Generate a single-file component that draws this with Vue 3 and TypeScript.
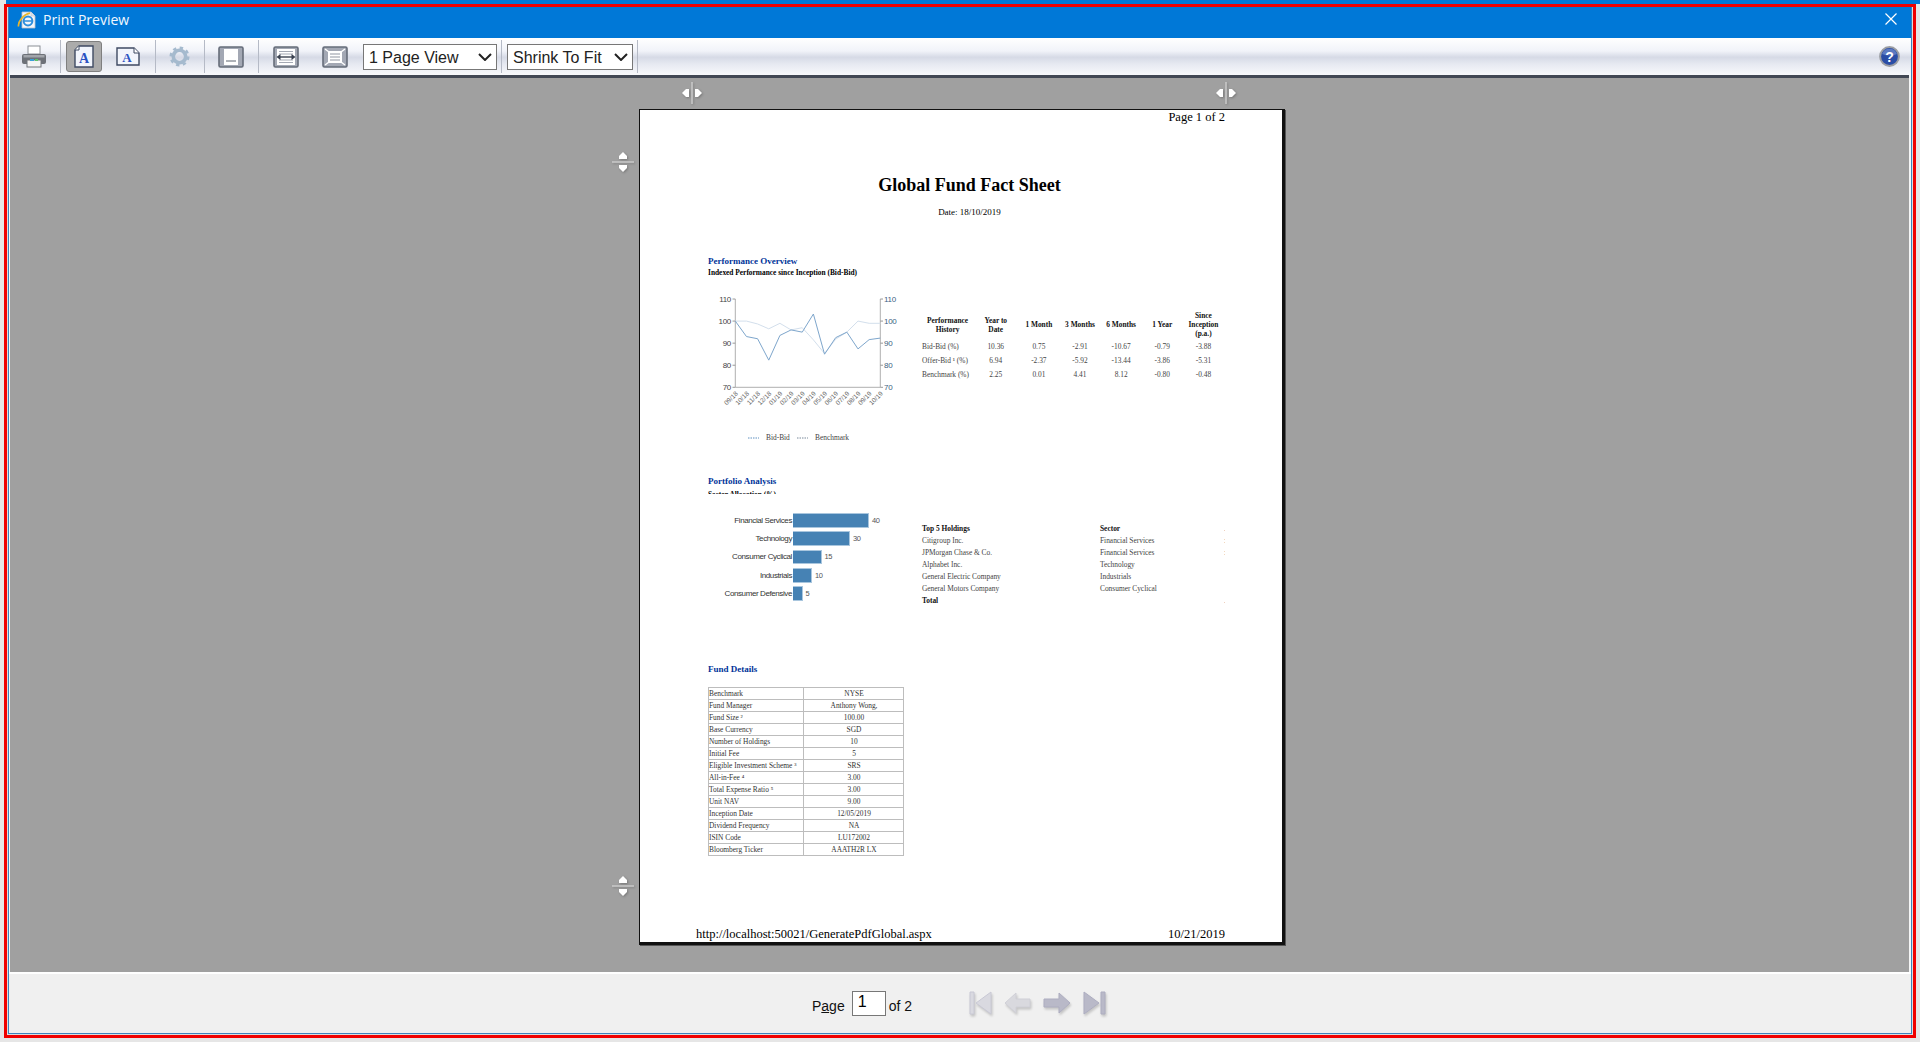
<template>
  <div class="screen">
    <div class="frame">
      <div class="window">
        <!-- title bar -->
        <header class="titlebar">
          <svg class="ie-icon" width="20" height="18" viewBox="0 0 20 18">
            <path d="M5 1h9l4 4v12H5z" fill="#f4f6fa" stroke="#b9c0cc" stroke-width="0.8" />
            <path d="M14 1v4h4" fill="#dfe4ec" stroke="#b9c0cc" stroke-width="0.6" />
            <circle cx="11" cy="10" r="4.4" fill="none" stroke="#2f8fdc" stroke-width="2" />
            <path d="M6.8 10h8.4" stroke="#2f8fdc" stroke-width="1.5" />
            <path d="M1.6 15.5C0.6 11 6 3.8 13 2.2" fill="none" stroke="#e8b52c" stroke-width="1.7" />
          </svg>
          <span class="title-text">Print Preview</span>
          <svg class="close-icon" width="12" height="12" viewBox="0 0 12 12">
            <path d="M0.5 0.5l11 11M11.5 0.5l-11 11" stroke="#fff" stroke-width="1.2" />
          </svg>
        </header>

        <!-- toolbar -->
        <div class="toolbar">
          <div class="tb-group g-print">
            <svg width="24" height="23" viewBox="0 0 24 23">
              <rect x="6" y="1" width="12" height="8" fill="#fff" stroke="#8b8f96" />
              <path d="M2 9h20a2 2 0 0 1 2 2v6a2 2 0 0 1-2 2H2a2 2 0 0 1-2-2v-6a2 2 0 0 1 2-2z" fill="#6d7178" />
              <rect x="1.5" y="10" width="21" height="2.5" fill="#a2a5ab" />
              <rect x="5" y="15" width="14" height="7" fill="#f4f4f4" stroke="#70747a" />
              <rect x="8" y="14" width="4" height="2" fill="#3aa0d8" />
              <rect x="13" y="14" width="3" height="2" fill="#5ec26a" />
            </svg>
          </div>
          <div class="tb-group g-orient">
            <button class="pressed">
              <svg width="20" height="23" viewBox="0 0 20 23">
                <path d="M5 1h14v21H1V5z" fill="#f2f5fc" stroke="#3f4a63" stroke-width="1.4" />
                <path d="M5 1v4H1" fill="#fff" stroke="#3f4a63" />
                <text x="10" y="18" class="icon-letter" font-size="14">A</text>
              </svg>
            </button>
            <svg class="landscape" width="24" height="19" viewBox="0 0 24 19">
              <path d="M1 1h17l5 5v12H1z" fill="#f2f5fc" stroke="#3f4a63" stroke-width="1.4" />
              <path d="M18 1v5h5" fill="#fff" stroke="#3f4a63" />
              <text x="11" y="15" class="icon-letter" font-size="13">A</text>
            </svg>
          </div>
          <div class="tb-group g-gear">
            <svg width="21" height="21" viewBox="0 0 21 21">
              <circle cx="10.5" cy="10.5" r="6.2" fill="none" stroke="#a5bace" stroke-width="3.6" />
              <circle cx="10.5" cy="10.5" r="8.8" fill="none" stroke="#a5bace" stroke-width="2.4" stroke-dasharray="3.4 3.5" />
            </svg>
          </div>
          <div class="tb-group g-fit">
            <svg width="26" height="22" viewBox="0 0 26 22">
              <rect x="1" y="1" width="24" height="20" rx="1.5" fill="#a3a8b4" stroke="#666d7a" stroke-width="1.6" />
              <rect x="6" y="3" width="14" height="16" fill="#fff" />
              <path d="M8 15h10" stroke="#5c6470" />
            </svg>
          </div>
          <div class="tb-group g-zoom">
            <svg width="26" height="22" viewBox="0 0 26 22">
              <rect x="1" y="1" width="24" height="20" rx="1.5" fill="#a3a8b4" stroke="#666d7a" stroke-width="1.6" />
              <rect x="4" y="3" width="18" height="16" fill="#fff" />
              <path d="M6 5.5h14M6 8h14M6 14h14M6 16.5h14" stroke="#a4a9b4" />
              <path d="M6 11h14" stroke="#3a4150" stroke-width="1.4" />
              <path d="M3.5 11l4-3v6zM22.5 11l-4-3v6z" fill="#3a4150" />
            </svg>
            <svg width="26" height="22" viewBox="0 0 26 22">
              <rect x="1" y="1" width="24" height="20" rx="1.5" fill="#a3a8b4" stroke="#666d7a" stroke-width="1.6" />
              <rect x="6" y="5" width="14" height="12" fill="#fff" />
              <path d="M8 8h10M8 11h10M8 14h10" stroke="#8f95a1" />
              <path d="M3 3l4 3M23 3l-4 3M3 19l4-3M23 19l-4-3" stroke="#fff" stroke-width="1.4" />
            </svg>
            <div class="select-wrap view">
              <select>
                <option>1 Page View</option>
                <option>2 Page View</option>
              </select>
              <svg class="chev" width="14" height="8" viewBox="0 0 14 8"><path d="M1 1l6 6 6-6" fill="none" stroke="#222" stroke-width="2" /></svg>
            </div>
          </div>
          <div class="tb-group g-shrink">
            <div class="select-wrap shrink">
              <select>
                <option>Shrink To Fit</option>
                <option>100%</option>
              </select>
              <svg class="chev" width="14" height="8" viewBox="0 0 14 8"><path d="M1 1l6 6 6-6" fill="none" stroke="#222" stroke-width="2" /></svg>
            </div>
          </div>
          <svg class="help-icon" width="21" height="21" viewBox="0 0 21 21">
            <circle cx="10.5" cy="10.5" r="9.4" fill="#2a4da6" stroke="#9b9da3" stroke-width="2" />
            <path d="M3 8a8 8 0 0 1 15 0q-7 3-15 0z" fill="#7f97d4" opacity="0.6" />
            <text x="10.5" y="15.5" class="help-mark">?</text>
          </svg>
        </div>

        <!-- preview area -->
        <div class="view-wrap">
          <main class="stage">
            <svg v-for="h in ['hx1', 'hx2']" :key="h" class="handle" :class="h" width="24" height="22" viewBox="0 0 24 22">
              <path d="M12 0v22" stroke="#d8d8d8" stroke-width="1.2" />
              <path d="M2 11l4-4h3v8H6zM22 11l-4-4h-3v8h3z" fill="#fff" />
            </svg>
            <svg v-for="h in ['hy1', 'hy2']" :key="h" class="handle" :class="h" width="22" height="24" viewBox="0 0 22 24">
              <path d="M0 12h22" stroke="#d8d8d8" stroke-width="1.2" />
              <path d="M11 2l-4 4v3h8V6zM11 22l-4-4v-3h8v3z" fill="#fff" />
            </svg>

            <article class="page">
              <div class="page-no">Page 1 of 2</div>
              <h1 class="doc-title">Global Fund Fact Sheet</h1>
              <div class="doc-date">Date: 18/10/2019</div>

              <div class="doc-body">
                <h2 class="sec-title perf-title">Performance Overview</h2>
                <div class="sub-title">Indexed Performance since Inception (Bid-Bid)</div>

                <div class="perf-row">
                  <svg class="chart" width="212" height="170" viewBox="0 0 212 170">
                    <path d="M27.3 19V107.3H172.3V19" fill="none" stroke="#b0b0b0" />
                    <g v-for="t in ticks" :key="t">
                      <path :d="`M24.5 ${yAt(t)}H27.3M172.3 ${yAt(t)}H175`" stroke="#999" />
                      <text x="23" :y="yAt(t) + 3" text-anchor="end" class="axis-left">{{ t }}</text>
                      <text x="176" :y="yAt(t) + 3" class="axis-right">{{ t }}</text>
                    </g>
                    <polyline :points="benchmarkLine" fill="none" stroke="#d3dfec" stroke-width="1" />
                    <polyline :points="bidLine" fill="none" stroke="#7ea6cc" stroke-width="1" />
                    <text
                      v-for="(m, i) in months"
                      :key="m"
                      :x="xAt(i) + 3"
                      y="114"
                      text-anchor="end"
                      class="axis-month"
                      :transform="`rotate(-45 ${xAt(i) + 3} 114)`"
                    >{{ m }}</text>
                    <path d="M40 158h11" stroke="#5f90c0" stroke-dasharray="1.5 1" />
                    <text x="58" y="159.5" class="legend">Bid-Bid</text>
                    <path d="M89 158h11" stroke="#78899a" stroke-dasharray="1.5 1" />
                    <text x="107" y="159.5" class="legend">Benchmark</text>
                  </svg>

                  <table class="perf-table">
                    <colgroup>
                      <col class="c-name" />
                      <col class="c-ytd" />
                      <col class="c-m" /><col class="c-m" /><col class="c-m" /><col class="c-m" /><col class="c-m" />
                    </colgroup>
                    <thead>
                      <tr>
                        <th v-for="h in perfHead" :key="h">{{ h }}</th>
                      </tr>
                    </thead>
                    <tbody>
                      <tr v-for="r in perfRows" :key="r[0]">
                        <td v-for="(c, i) in r" :key="i">{{ c }}</td>
                      </tr>
                    </tbody>
                  </table>
                </div>

                <h2 class="sec-title port-title">Portfolio Analysis</h2>
                <div class="clipped-sub"><div class="sub-title">Sector Allocation (%)</div></div>

                <div class="analysis-row">
                  <div class="bars">
                    <div v-for="b in sectors" :key="b.name" class="bar-row">
                      <span class="bar-label">{{ b.name }}</span>
                      <span class="bar" :style="{ width: b.value * 1.9 + 'px' }"></span>
                      <span class="bar-value">{{ b.value }}</span>
                    </div>
                  </div>

                  <table class="hold-table">
                    <thead>
                      <tr>
                        <th>Top 5 Holdings</th>
                        <th>Sector</th>
                        <th class="cut">.</th>
                      </tr>
                    </thead>
                    <tbody>
                      <tr v-for="h in holdings" :key="h[0]">
                        <td>{{ h[0] }}</td>
                        <td>{{ h[1] }}</td>
                        <td class="cut">{{ h[2] }}</td>
                      </tr>
                      <tr>
                        <th>Total</th>
                        <td></td>
                        <td class="cut">.</td>
                      </tr>
                    </tbody>
                  </table>
                </div>

                <h2 class="sec-title">Fund Details</h2>
                <table class="fund-table">
                  <tbody>
                    <tr v-for="f in fundDetails" :key="f[0]">
                      <td>{{ f[0] }}</td>
                      <td>{{ f[1] }}</td>
                    </tr>
                  </tbody>
                </table>
              </div>

              <footer class="page-foot">
                <span>http://localhost:50021/GeneratePdfGlobal.aspx</span>
                <span>10/21/2019</span>
              </footer>
            </article>
          </main>
        </div>

        <!-- page navigation -->
        <footer class="pager">
          <span class="pager-label">P<u>a</u>ge</span>
          <input class="pager-input" value="1" />
          <span class="pager-of">of 2</span>
          <div class="pager-nav">
            <svg width="23" height="24" viewBox="0 0 23 24">
              <path d="M1 1h4v22H1zM22 1v22L7 12z" fill="#d9d9e0" stroke="#c8c8d4" />
            </svg>
            <svg width="27" height="22" viewBox="0 0 27 22">
              <path d="M1 11L12 1v6h14v8H12v6z" fill="#d9d9de" stroke="#cfcfd6" />
            </svg>
            <svg width="28" height="22" viewBox="0 0 28 22">
              <path d="M27 11L16 1v6H1v8h15v6z" fill="#b9b9c8" stroke="#adadc0" />
            </svg>
            <svg width="23" height="24" viewBox="0 0 23 24">
              <path d="M18 1h4v22h-4zM1 1v22l15-11z" fill="#b9b9c8" stroke="#adadc0" />
            </svg>
          </div>
        </footer>
      </div>
    </div>
  </div>
</template>

<script setup lang="ts">
import { computed } from 'vue'

const ticks = [110, 100, 90, 80, 70]
const months = ['09/18', '10/18', '11/18', '12/18', '01/19', '02/19', '03/19', '04/19', '05/19', '06/19', '07/19', '08/19', '09/19', '10/19']
const bidBid = [100, 93, 92, 82.3, 93.5, 96, 95, 103.2, 85, 92.5, 95, 87.4, 91.6, 92.3]
const benchmark = [100, 100, 98.7, 96.5, 99, 96, 97, 91.5, 85.3, 91.8, 95, 100, 99, 99]

const xAt = (i: number) => 27.3 + i * 11.154
const yAt = (v: number) => 107.3 - (v - 70) * 2.207

function toPoints(values: number[]) {
  return values.map((v, i) => `${xAt(i)},${yAt(v)}`).join(' ')
}

const bidLine = computed(() => toPoints(bidBid))
const benchmarkLine = computed(() => toPoints(benchmark))

const perfHead = ['Performance History', 'Year to Date', '1 Month', '3 Months', '6 Months', '1 Year', 'Since Inception (p.a.)']
const perfRows = [
  ['Bid-Bid (%)', '10.36', '0.75', '-2.91', '-10.67', '-0.79', '-3.88'],
  ['Offer-Bid ¹ (%)', '6.94', '-2.37', '-5.92', '-13.44', '-3.86', '-5.31'],
  ['Benchmark (%)', '2.25', '0.01', '4.41', '8.12', '-0.80', '-0.48'],
]

const sectors = [
  { name: 'Financial Services', value: 40 },
  { name: 'Technology', value: 30 },
  { name: 'Consumer Cyclical', value: 15 },
  { name: 'Industrials', value: 10 },
  { name: 'Consumer Defensive', value: 5 },
]

const holdings = [
  ['Citigroup Inc.', 'Financial Services', ':'],
  ['JPMorgan Chase & Co.', 'Financial Services', ':'],
  ['Alphabet Inc.', 'Technology', ''],
  ['General Electric Company', 'Industrials', ''],
  ['General Motors Company', 'Consumer Cyclical', ''],
]

const fundDetails = [
  ['Benchmark', 'NYSE'],
  ['Fund Manager', 'Anthony Wong,'],
  ['Fund Size ²', '100.00'],
  ['Base Currency', 'SGD'],
  ['Number of Holdings', '10'],
  ['Initial Fee', '5'],
  ['Eligible Investment Scheme ³', 'SRS'],
  ['All-in-Fee ⁴', '3.00'],
  ['Total Expense Ratio ⁵', '3.00'],
  ['Unit NAV', '9.00'],
  ['Inception Date', '12/05/2019'],
  ['Dividend Frequency', 'NA'],
  ['ISIN Code', 'LU172002'],
  ['Bloomberg Ticker', 'AAATH2R LX'],
]
</script>

<style scoped>
.screen {
  width: 1920px;
  height: 1042px;
  box-sizing: border-box;
  padding: 4px;
  overflow: hidden;
  background: linear-gradient(#0078d7 4px, transparent 4px) 6px 0 no-repeat, #e6e6e6;
  font-family: "Liberation Sans", Arial, sans-serif;
}

.frame {
  height: 1034px;
  box-sizing: border-box;
  border: 3px solid #f00000;
  padding: 0 1px 1px;
  background: #dcdcdc;
}

.window {
  height: 100%;
  box-sizing: border-box;
  display: flex;
  flex-direction: column;
  border: 1px solid #3c82be;
  border-top: 0;
  background: #f6f6f6;
}

/* 标题栏 */
.titlebar {
  height: 31px;
  flex: none;
  display: flex;
  align-items: center;
  background: #0078d7;
  padding: 0 14px 0 8px;
  box-sizing: border-box;
}

.ie-icon {
  margin-top: -5px;
}

.title-text {
  margin-left: 6px;
  margin-top: -7px;
  color: #f2f8ff;
  font: 14px "Open Sans", "Noto Sans", sans-serif;
}

.close-icon {
  margin-left: auto;
  margin-top: -7px;
}

/* 工具栏 */
.toolbar {
  height: 37px;
  flex: none;
  display: flex;
  align-items: center;
  background: linear-gradient(#ffffff 0%, #f1f3f9 35%, #d6dae6 52%, #e6e9f1 70%, #f8f9fc 100%);
}

.tb-group {
  height: 33px;
  display: flex;
  align-items: center;
  box-sizing: border-box;
  border-right: 1px solid #b5bac6;
}

.g-print {
  width: 52px;
  padding-left: 13px;
}

.g-orient {
  width: 95px;
  padding-left: 5px;
  gap: 14px;
}

.g-orient button {
  width: 36px;
  height: 31px;
  padding: 0;
  display: flex;
  align-items: center;
  justify-content: center;
  background: #ababab;
  border: 1.5px solid #7f7f7f;
  border-radius: 3px;
}

.g-gear {
  width: 49px;
  padding-left: 13px;
}

.g-fit {
  width: 54px;
  padding-left: 13px;
}

.g-zoom {
  width: 243px;
  padding-left: 14px;
  gap: 23px;
}

.g-zoom .select-wrap {
  margin-left: -8px;
}

.g-shrink {
  width: 136px;
  padding-left: 5px;
}

.icon-letter {
  font-family: "Liberation Serif", serif;
  font-weight: 700;
  fill: #2b52c2;
  text-anchor: middle;
}

.select-wrap {
  position: relative;
  height: 26px;
}

.select-wrap.view {
  width: 134px;
}

.select-wrap.shrink {
  width: 126px;
}

.select-wrap select {
  width: 100%;
  height: 100%;
  box-sizing: border-box;
  appearance: none;
  border: 1.5px solid #777;
  border-radius: 0;
  background: #fff;
  padding: 2px 0 0 5px;
  color: #222;
  font: 16px "Liberation Sans", Arial, sans-serif;
}

.chev {
  position: absolute;
  right: 5px;
  top: 9px;
  pointer-events: none;
}

.help-icon {
  margin-left: auto;
  margin-right: 11px;
}

.help-mark {
  font: 700 14px "Liberation Sans", Arial, sans-serif;
  fill: #fff;
  text-anchor: middle;
}

/* 预览区域 */
.view-wrap {
  flex: 1;
  min-height: 0;
  display: flex;
  padding: 0 2px 0 1px;
  background: #f6f6f6;
}

.stage {
  position: relative;
  flex: 1;
  box-sizing: border-box;
  border-top: 3px solid #424854;
  background: #a0a0a0;
  padding: 31px 0 0 629px;
  overflow: hidden;
}

.handle {
  position: absolute;
  filter: drop-shadow(1px 1px 1px rgba(0, 0, 0, 0.25));
}

.hx1 { left: 670px; top: 4px; }
.hx2 { left: 1204px; top: 4px; }
.hy1 { left: 602px; top: 72px; }
.hy2 { left: 602px; top: 796px; }

.page {
  width: 642px;
  height: 832px;
  display: flex;
  flex-direction: column;
  background: #fff;
  border-style: solid;
  border-color: #111;
  border-width: 1px 3px 3px 1px;
  box-shadow: 1px 1px 0 #555;
  color: #000;
  font-family: "Liberation Serif", "Times New Roman", serif;
}

.page-no {
  line-height: 14px;
  font-size: 12.5px;
  text-align: right;
  padding-right: 57px;
}

.doc-title {
  margin: 50px 0 0;
  padding-left: 17px;
  line-height: 22px;
  font-size: 18px;
  font-weight: 700;
  text-align: center;
}

.doc-date {
  margin-top: 10px;
  padding-left: 17px;
  line-height: 12px;
  font-size: 9px;
  text-align: center;
}

.doc-body {
  padding-left: 68px;
  font-size: 7.4px;
}

.sec-title {
  margin: 0;
  line-height: 12px;
  font-size: 9px;
  font-weight: 700;
  color: #003399;
}

.perf-title {
  margin-top: 37px;
}

.sub-title {
  line-height: 10px;
  font-size: 7.4px;
  font-weight: 700;
  white-space: nowrap;
}

.perf-title + .sub-title {
  margin-top: 1px;
}

.perf-row {
  display: flex;
  margin-top: 2px;
  height: 170px;
}

.chart {
  flex: none;
}

.axis-left,
.axis-right {
  font: 8px "Liberation Sans", Arial, sans-serif;
  letter-spacing: -0.3px;
  fill: #444;
}

.axis-right {
  fill: #3d5f82;
}

.axis-month {
  font: 6.5px "Liberation Sans", Arial, sans-serif;
  fill: #666;
}

.legend {
  font: 7.4px "Liberation Serif", serif;
  fill: #444;
}

.perf-table {
  table-layout: fixed;
  width: 302px;
  height: 70px;
  margin: 31px 0 0 2px;
  border-collapse: collapse;
  color: #444;
}

.c-name { width: 51px; }
.c-ytd { width: 45px; }
.c-m { width: 41px; }

.perf-table th {
  height: 29px;
  padding: 0;
  line-height: 8.7px;
  font-weight: 700;
  color: #111;
}

.perf-table th:nth-child(2) {
  padding: 0 7px;
}

.perf-table th:last-child {
  padding: 0 4px;
}

.perf-table td {
  height: 13.5px;
  padding: 0;
  text-align: center;
  white-space: nowrap;
}

.perf-table td:first-child {
  text-align: left;
}

.port-title {
  margin-top: 25px;
}

.clipped-sub {
  height: 6px;
  padding-top: 1.5px;
  box-sizing: border-box;
  margin-top: 1px;
  overflow: hidden;
}

.analysis-row {
  display: flex;
  height: 169px;
}

.bars {
  flex: none;
  width: 214px;
  padding-top: 19px;
  display: flex;
  flex-direction: column;
  gap: 3.6px;
}

.bar-row {
  display: flex;
  align-items: center;
  height: 14.7px;
}

.bar-label {
  width: 84px;
  margin-right: 1px;
  text-align: right;
  white-space: nowrap;
  font: 8px "Liberation Sans", Arial, sans-serif;
  letter-spacing: -0.4px;
  color: #333;
}

.bar {
  height: 100%;
  box-sizing: border-box;
  background: #4682b4;
  border: 1px solid #a9c6de;
  border-left: 0;
}

.bar-value {
  margin-left: 3px;
  font: 7.5px "Liberation Sans", Arial, sans-serif;
  letter-spacing: -0.3px;
  color: #555;
}

.hold-table {
  table-layout: fixed;
  width: 303px;
  height: 84px;
  margin: 28px 0 0 0;
  border-collapse: collapse;
  color: #444;
}

.hold-table th,
.hold-table td {
  height: 12px;
  padding: 0;
  text-align: left;
  white-space: nowrap;
}

.hold-table th {
  font-weight: 700;
  color: #111;
}

.hold-table th:first-child,
.hold-table td:first-child {
  width: 178px;
}

.hold-table .cut {
  width: 1px;
  overflow: hidden;
  color: #777;
  font-weight: 400;
}

.fund-table {
  table-layout: fixed;
  width: 196px;
  margin-top: 12px;
  border-collapse: collapse;
  color: #333;
}

.fund-table td {
  height: 11px;
  padding: 0 0 0 1px;
  border: 1px solid #bdbdbd;
  white-space: nowrap;
  line-height: 11px;
}

.fund-table td:first-child {
  width: 94px;
  padding-left: 0;
}

.fund-table td:last-child {
  text-align: center;
}

.page-foot {
  margin-top: auto;
  display: flex;
  justify-content: space-between;
  padding: 0 57px 1px 56px;
  line-height: 14px;
  font-size: 12.5px;
}

/* 翻页栏 */
.pager {
  height: 61px;
  flex: none;
  box-sizing: border-box;
  display: flex;
  align-items: center;
  justify-content: center;
  padding: 0 2px 0 0;
  border-top: 2px solid #fff;
  background: #f0f0f0;
  font-size: 14px;
  color: #111;
}

.pager-label {
  margin-top: 4px;
}

.pager-input {
  width: 34px;
  height: 25px;
  box-sizing: border-box;
  margin-left: 7px;
  border: 1.5px solid #777;
  padding: 0 0 3px 5px;
  background: #fff;
  font: 16px "Liberation Sans", Arial, sans-serif;
}

.pager-of {
  margin-left: 3px;
  margin-top: 4px;
}

.pager-nav {
  display: flex;
  align-items: center;
  gap: 12px;
  margin-left: 57px;
  margin-top: -2px;
}

.pager-nav svg {
  filter: drop-shadow(1px 2px 1px rgba(0, 0, 0, 0.18));
}
</style>

<style>
html, body {
  margin: 0;
  overflow: hidden;
}
</style>
